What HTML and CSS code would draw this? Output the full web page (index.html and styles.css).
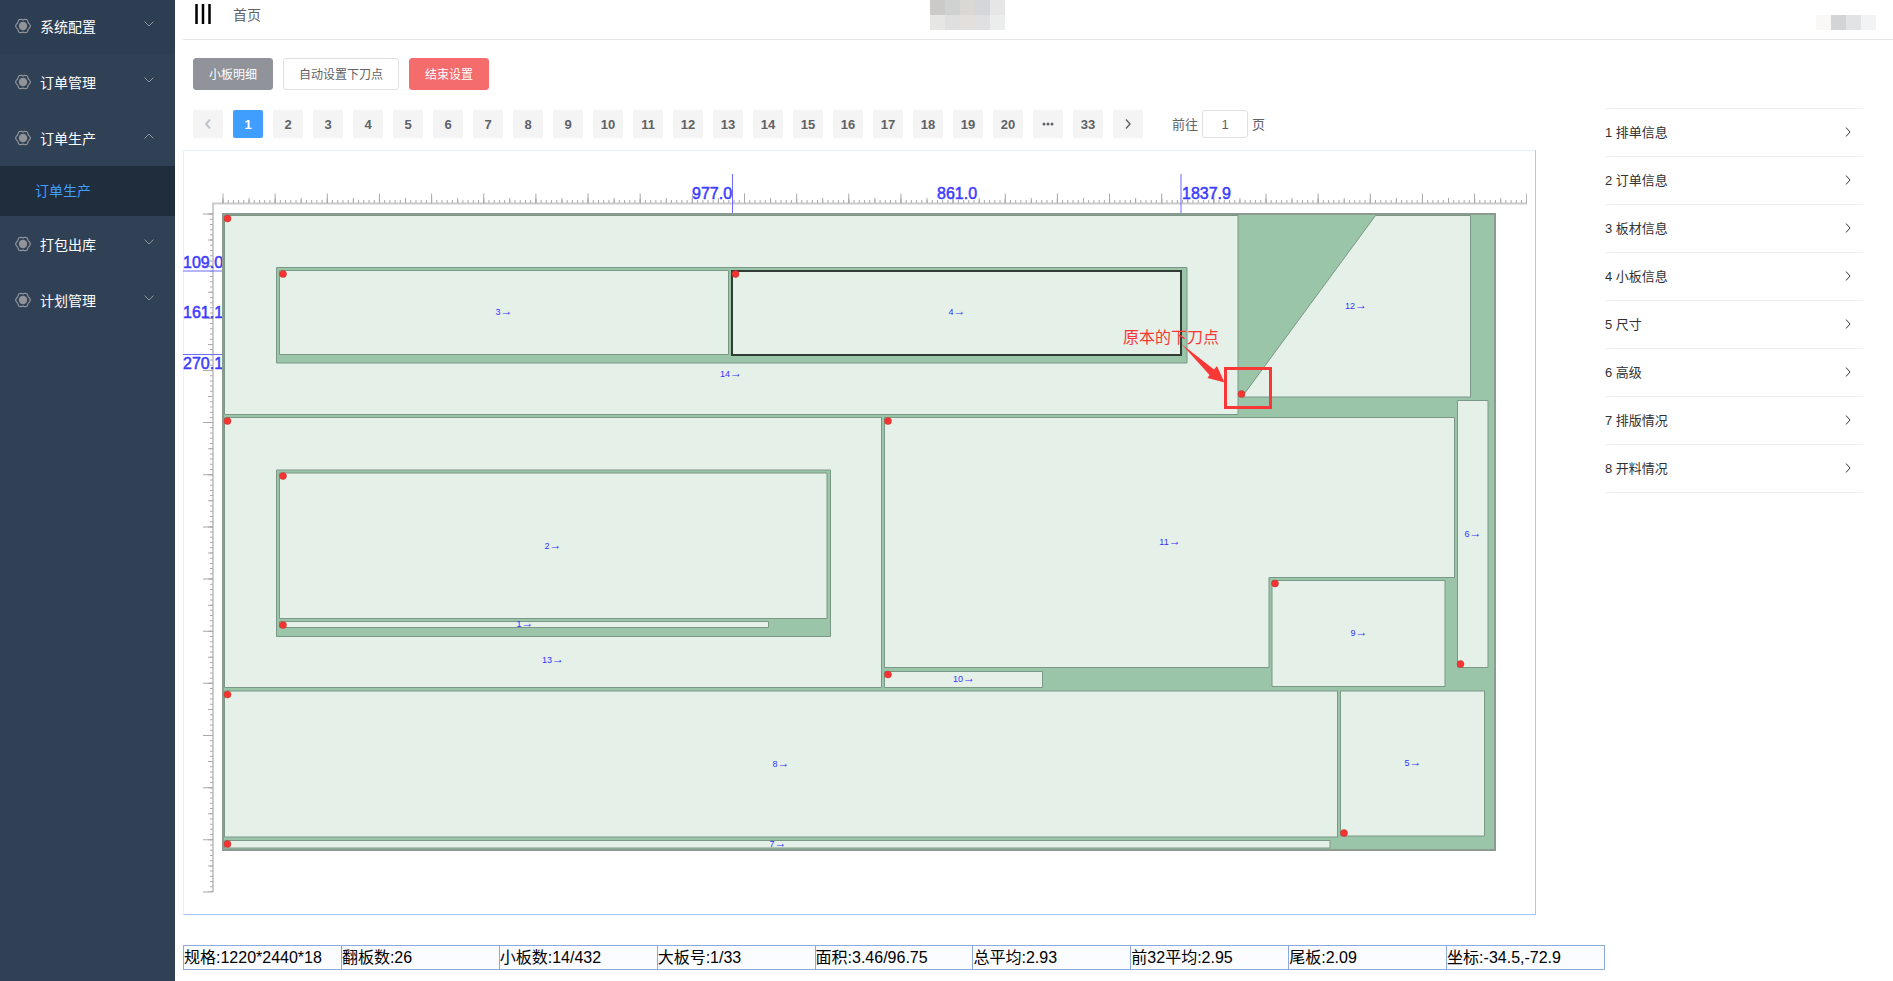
FILE: index.html
```html
<!DOCTYPE html>
<html lang="zh-CN">
<head>
<meta charset="utf-8">
<title>订单生产</title>
<link rel="stylesheet" href="styles.css">
</head>
<body>
<svg class="defs" aria-hidden="true">
  <symbol id="gear" viewBox="0 0 16 16">
    <path d="M15.500 8 14.600 9.800 13.300 11.100 12.800 12.800 11.800 14.500 9.800 14.600 8 14.100 6.200 14.600 4.200 14.500 3.200 12.800 2.700 11.100 1.400 9.800.5 8 1.400 6.200 2.700 4.900 3.200 3.200 4.200 1.500 6.200 1.400 8 1.900 9.800 1.400 11.800 1.500 12.800 3.200 13.300 4.900 14.600 6.200z" fill="none" stroke="currentColor" stroke-width="1.200" stroke-linejoin="round"/>
    <circle cx="8" cy="8" r="4.200" fill="currentColor"/>
  </symbol>
  <symbol id="down" viewBox="0 0 10 6"><path d="M.5.5 5 5 9.500.5" fill="none" stroke="currentColor"/></symbol>
  <symbol id="right" viewBox="0 0 6 10"><path d="M1 .5 5 5 1 9.500" fill="none" stroke="currentColor"/></symbol>
</svg>
<div class="app">
  <nav class="sidebar">
    <button class="menu-item menu-item-hover"><svg class="gear"><use href="#gear"/></svg><span>系统配置</span><svg class="caret"><use href="#down"/></svg></button>
    <button class="menu-item"><svg class="gear"><use href="#gear"/></svg><span>订单管理</span><svg class="caret"><use href="#down"/></svg></button>
    <button class="menu-item"><svg class="gear"><use href="#gear"/></svg><span>订单生产</span><svg class="caret caret-up"><use href="#down"/></svg></button>
    <a class="submenu-item" href="#">订单生产</a>
    <button class="menu-item"><svg class="gear"><use href="#gear"/></svg><span>打包出库</span><svg class="caret"><use href="#down"/></svg></button>
    <button class="menu-item"><svg class="gear"><use href="#gear"/></svg><span>计划管理</span><svg class="caret"><use href="#down"/></svg></button>
  </nav>

  <div class="main">
    <header class="topbar">
      <button class="toggle" aria-label="菜单"><svg width="16" height="20" viewBox="0 0 16 20"><path d="M1.500 0v20M8 0v20M14.500 0v20" stroke="#000" stroke-width="2.500"/></svg></button>
      <a class="crumb" href="#">首页</a>
      <svg class="title-mosaic" width="75" height="30" viewBox="0 0 75 30" shape-rendering="crispEdges">
        <path fill="#cccac6" d="M0 0h15v15H0z"/><path fill="#d0d2d2" d="M15 0h15v15H15z"/><path fill="#dad8d5" d="M30 0h15v15H30z"/><path fill="#d5d6da" d="M45 0h15v15H45z"/><path fill="#e6e6e7" d="M60 0h15v15H60z"/>
        <path fill="#e6e6e4" d="M0 15h15v15H0z"/><path fill="#dfdfdf" d="M15 15h15v15H15z"/><path fill="#e3dfdc" d="M30 15h15v15H30z"/><path fill="#e0e0e3" d="M45 15h15v15H45z"/><path fill="#ebeded" d="M60 15h15v15H60z"/>
      </svg>
      <svg class="user-mosaic" width="60" height="15" viewBox="0 0 60 15" shape-rendering="crispEdges">
        <path fill="#f9f8f7" d="M0 0h15v15H0z"/><path fill="#d2d4d6" d="M15 0h15v15H15z"/><path fill="#e2e3e5" d="M30 0h15v15H30z"/><path fill="#f2f3f4" d="M45 0h15v15H45z"/>
      </svg>
    </header>

    <div class="toolbar">
      <button class="btn btn-info">小板明细</button>
      <button class="btn">自动设置下刀点</button>
      <button class="btn btn-danger">结束设置</button>
    </div>

    <div class="columns">
      <section class="workspace">
        <div class="pager">
          <button class="page page-off" aria-label="上一页" disabled><svg class="flip" width="6" height="10"><use href="#right"/></svg></button>
          <button class="page page-on">1</button><button class="page">2</button><button class="page">3</button><button class="page">4</button><button class="page">5</button><button class="page">6</button><button class="page">7</button><button class="page">8</button><button class="page">9</button><button class="page">10</button><button class="page">11</button><button class="page">12</button><button class="page">13</button><button class="page">14</button><button class="page">15</button><button class="page">16</button><button class="page">17</button><button class="page">18</button><button class="page">19</button><button class="page">20</button>
          <button class="page" aria-label="更多"><svg width="12" height="4" viewBox="0 0 12 4"><circle cx="2" cy="2" r="1.500"/><circle cx="6" cy="2" r="1.500"/><circle cx="10" cy="2" r="1.500"/></svg></button>
          <button class="page">33</button>
          <button class="page" aria-label="下一页"><svg width="6" height="10" stroke-width="1.400"><use href="#right"/></svg></button>
          <div class="jump"><label for="goto">前往</label><input id="goto" type="text" value="1"><span>页</span></div>
        </div>

        <div class="board">
          <svg class="drawing" viewBox="184 151 1351 763">
            <g class="axis">
              <path d="M212 203.500H1527M213 203V892"/>
            </g>
            <g class="ticks">
              <path d="M222.500 201.500H1527" stroke-width="3" stroke-dasharray="1 4.215"/>
              <path d="M222.500 200.500H1527" stroke-width="5" stroke-dasharray="1 25.075"/>
              <path d="M222.500 198.500H1527" stroke-width="10" stroke-dasharray="1 51.150"/>
              <path d="M211.500 213.500V892" stroke-width="3" stroke-dasharray="1 4.215"/>
              <path d="M210.500 213.500V892" stroke-width="5" stroke-dasharray="1 25.075"/>
              <path d="M208 213.500V892.500" stroke-width="10" stroke-dasharray="1 51.150"/>
            </g>
            <g class="dims">
              <path d="M732.500 174V214M1181 174V214M183 271H223M183 354.500H223"/>
              <text x="692" y="199">977.0</text><text x="937" y="199">861.0</text><text x="1182" y="199">1837.9</text>
              <text x="183" y="268">109.0</text><text x="183" y="318">161.1</text><text x="183" y="369">270.1</text>
            </g>
            <rect class="sheet" x="223" y="214" width="1272" height="636"/>
            <g class="piece">
              <path d="M224.500 215.500H1238V414.500H224.500z"/>
              <path class="waste" d="M276.500 267.500H1187V363H276.500z"/>
              <path d="M279.500 270.500H728.500V354.500H279.500z"/>
              <path d="M1242 397 1375.500 215.500H1470.500V397z"/>
              <path d="M1457.500 400.500H1488V667.500H1457.500z"/>
              <path d="M224.500 417.500H881.500V687.500H224.500z"/>
              <path class="waste" d="M276.500 470H830.500V636.500H276.500z"/>
              <path d="M279.500 473H827V618.500H279.500z"/>
              <path d="M279.500 621.500H768.500V627.500H279.500z"/>
              <path d="M884.500 417.500H1454.500V577.500H1269V667.500H884.500z"/>
              <path d="M1272 580.500H1445V686.500H1272z"/>
              <path d="M884.500 671.500H1042.500V687.500H884.500z"/>
              <path d="M224.500 691H1337.500V837H224.500z"/>
              <path d="M1340.500 691H1484.500V836H1340.500z"/>
              <path d="M224.500 840.500H1330V848H224.500z"/>
              <path class="picked" d="M732 271H1181V355H732z"/>
            </g>
            <g class="dots">
              <circle cx="227.500" cy="218.500" r="3.500"/><circle cx="283" cy="274" r="3.500"/><circle cx="735.500" cy="274" r="3.500"/><circle cx="1241.500" cy="394" r="3.500"/>
              <circle cx="227.500" cy="421" r="3.500"/><circle cx="888" cy="421" r="3.500"/><circle cx="283" cy="476" r="3.500"/><circle cx="283" cy="625" r="3.500"/>
              <circle cx="1275" cy="583.500" r="3.500"/><circle cx="1460.500" cy="664" r="3.500"/><circle cx="888" cy="674.500" r="3.500"/>
              <circle cx="227.500" cy="694.500" r="3.500"/><circle cx="1344" cy="833" r="3.500"/><circle cx="227.500" cy="844" r="3.500"/>
            </g>
            <g class="labels">
              <text x="504" y="315">3<tspan>→</tspan></text><text x="957" y="315">4<tspan>→</tspan></text><text x="731" y="377">14<tspan>→</tspan></text><text x="1356" y="309">12<tspan>→</tspan></text>
              <text x="553" y="549">2<tspan>→</tspan></text><text x="525" y="627">1<tspan>→</tspan></text><text x="553" y="663">13<tspan>→</tspan></text><text x="1170" y="545">11<tspan>→</tspan></text>
              <text x="1473" y="537">6<tspan>→</tspan></text><text x="1359" y="636">9<tspan>→</tspan></text><text x="964" y="682">10<tspan>→</tspan></text><text x="781" y="767">8<tspan>→</tspan></text>
              <text x="1413" y="766">5<tspan>→</tspan></text><text x="778" y="847">7<tspan>→</tspan></text>
            </g>
            <g class="note">
              <text x="1123" y="343">原本的下刀点</text>
              <path d="M1181.500 344 1214 369.500 1217 366 1224.500 382.500 1207.500 378 1209.500 375z"/>
              <rect x="1225.500" y="368.500" width="45" height="39"/>
            </g>
          </svg>
        </div>

        <ul class="status">
          <li>规格:1220*2440*18</li><li>翻板数:26</li><li>小板数:14/432</li><li>大板号:1/33</li><li>面积:3.46/96.75</li><li>总平均:2.93</li><li>前32平均:2.95</li><li>尾板:2.09</li><li>坐标:-34.5,-72.9</li>
        </ul>
      </section>

      <aside class="panel">
        <button class="fold">1 排单信息<svg width="6" height="10"><use href="#right"/></svg></button>
        <button class="fold">2 订单信息<svg width="6" height="10"><use href="#right"/></svg></button>
        <button class="fold">3 板材信息<svg width="6" height="10"><use href="#right"/></svg></button>
        <button class="fold">4 小板信息<svg width="6" height="10"><use href="#right"/></svg></button>
        <button class="fold">5 尺寸<svg width="6" height="10"><use href="#right"/></svg></button>
        <button class="fold">6 高级<svg width="6" height="10"><use href="#right"/></svg></button>
        <button class="fold">7 排版情况<svg width="6" height="10"><use href="#right"/></svg></button>
        <button class="fold">8 开料情况<svg width="6" height="10"><use href="#right"/></svg></button>
      </aside>
    </div>
  </div>
</div>
</body>
</html>
```
FILE: styles.css
```css
* { box-sizing: border-box; }
body {
  margin: 0;
  background: #fff;
  color: #606266;
  font-family: "Liberation Sans", "Noto Sans CJK SC", sans-serif;
  font-size: 14px;
}
button, input { font: inherit; color: inherit; margin: 0; padding: 0; border: 0; background: none; }
button { cursor: pointer; }
a { color: inherit; text-decoration: none; }
.defs { position: absolute; width: 0; height: 0; }
.app { display: flex; min-height: 100vh; }

.sidebar {
  flex: 0 0 175px;
  background: #304156;
  color: #fff;
}
.menu-item {
  display: flex;
  align-items: center;
  width: 100%;
  height: 56px;
  padding: 0 21px 0 15px;
  text-align: left;
}
.menu-item span { flex: 1; }
.menu-item-hover { height: 54px; padding-bottom: 2px; background: #2d3d52; }
.gear { width: 16px; height: 16px; margin-right: 9px; color: #909399; }
.caret { width: 10px; height: 6px; margin-bottom: 4px; color: #909399; }
.caret-up { transform: rotate(180deg); }
.submenu-item {
  display: block;
  height: 50px;
  padding-left: 35px;
  line-height: 50px;
  background: #1f2d3d;
  color: #409eff;
}

.main { flex: 1; min-width: 0; padding-left: 8px; }
.topbar {
  position: relative;
  display: flex;
  align-items: flex-start;
  height: 40px;
  padding: 4px 17px 0 12px;
  border-bottom: 1px solid #e4e4e4;
}
.toggle { height: 20px; }
.toggle svg { display: block; }
.crumb { margin-left: 22px; line-height: 22px; }
.title-mosaic { position: absolute; top: 0; left: 747px; }
.user-mosaic { margin: 11px 0 0 auto; }

.toolbar { display: flex; gap: 10px; padding: 18px 10px; }
.btn {
  height: 32px;
  padding: 0 15px 2px;
  border: 1px solid #dcdfe6;
  border-radius: 3px;
  font-size: 12px;
}
.btn-info { background: #909399; border-color: #909399; color: #fff; }
.btn-danger { background: #f56c6c; border-color: #f56c6c; color: #fff; }

.columns { display: grid; grid-template-columns: 1fr 288px; }
.workspace { min-width: 0; }
.pager { display: flex; gap: 10px; padding: 2px 10px 12px; }
.page {
  display: flex;
  align-items: center;
  justify-content: center;
  width: 30px;
  height: 28px;
  border-radius: 2px;
  background: #f4f4f5;
  font-size: 13px;
  font-weight: bold;
}
.page svg { fill: currentColor; }
.page-on { background: #409eff; color: #fff; }
.page-off { color: #c0c4cc; }
.flip { transform: scaleX(-1); stroke-width: 2; }
.jump { display: flex; align-items: center; gap: 4px; margin-left: 19px; font-size: 13px; }
.jump label, .jump span { padding-bottom: 2px; }
.jump input {
  width: 46px;
  height: 28px;
  border: 1px solid #dcdfe6;
  border-radius: 3px;
  text-align: center;
}

.board {
  margin-right: 69px;
  border: 1px solid #e6f0ff;
  border-right-color: #a6c8ff;
  border-bottom-color: #a6c8ff;
}
.drawing { display: block; width: 100%; height: auto; overflow: visible; }
.axis path { fill: none; stroke: #ccc; stroke-width: 2; }
.ticks path { fill: none; stroke: #aaa; }
.dims path { stroke: #6b6bff; stroke-width: 1; }
.dims text { font-size: 16px; fill: #3c3cff; stroke: #3c3cff; stroke-width: 0.5; }
.sheet { fill: #9bc5a8; stroke: #8c9b90; stroke-width: 2; }
.piece path { fill: #e5f0e8; stroke: #7b9785; stroke-width: 1; }
.piece .waste { fill: #9bc5a8; }
.piece .picked { stroke: #333b36; stroke-width: 2; }
.dots circle { fill: #fa3232; stroke: #b03c32; stroke-width: 0.5; }
.labels text { font-size: 9px; fill: #3333ff; text-anchor: middle; }
.labels tspan { font-size: 12px; }
.note text { font-size: 16px; fill: #fa3737; }
.note path { fill: #fa3737; }
.note rect { fill: none; stroke: #fa3737; stroke-width: 3; }

.status {
  display: grid;
  grid-template-columns: repeat(9, 1fr);
  margin: 30px 0 0;
  padding: 0;
  list-style: none;
  border: 1px solid #8eaadb;
  border-left: 0;
  background: #fafcff;
  color: #000;
  font-size: 16px;
  line-height: 23px;
}
.status li { height: 23px; border-left: 1px solid #8eaadb; white-space: nowrap; }

.panel { align-self: start; padding-right: 30px; color: #303133; }
.fold {
  display: flex;
  align-items: center;
  justify-content: space-between;
  width: 100%;
  height: 48px;
  padding: 0 12px 2px 0;
  border-bottom: 1px solid #ebeef5;
  font-size: 13px;
}
.fold:first-child { height: 49px; border-top: 1px solid #ebeef5; }
```
